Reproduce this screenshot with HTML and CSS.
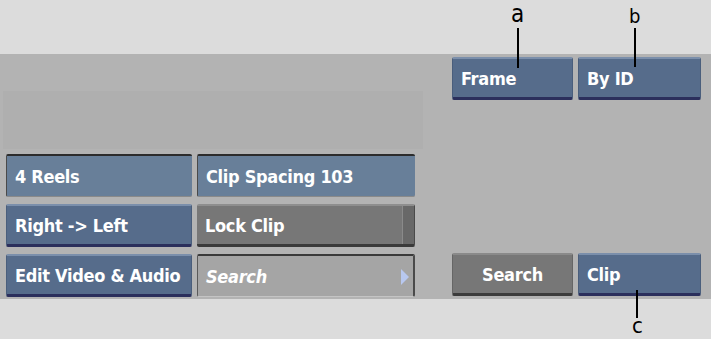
FILE: index.html
```html
<!DOCTYPE html>
<html lang="en">
<head>
    <meta charset="UTF-8">
    <title>Clip Search</title>
    <link rel="stylesheet" href="styles.css">
</head>
<body>
    <div class="page">
        <div class="top-strip"></div>
        <section class="panel">
            <div class="left">
                <div class="inset"></div>
                <div class="grid">
                    <div class="btn field">4 Reels</div>
                    <div class="btn field">Clip Spacing 103</div>
                    <div class="btn blue">Right -&gt; Left</div>
                    <div class="btn lock">Lock Clip</div>
                    <div class="btn blue">Edit Video &amp; Audio</div>
                    <div class="btn search-field"><em>Search</em><span class="arrow"></span></div>
                </div>
            </div>
            <div class="right">
                <div class="pair">
                    <div class="btn blue">Frame</div>
                    <div class="btn blue">By ID</div>
                </div>
                <div class="pair">
                    <div class="btn gray">Search</div>
                    <div class="btn blue">Clip</div>
                </div>
            </div>
        </section>
        <div class="bottom-strip"></div>

        <!-- callouts -->
        <div class="callout ca"><span>a</span><i></i></div>
        <div class="callout cb"><span>b</span><i></i></div>
        <div class="callout cc"><i></i><span>c</span></div>
    </div>
</body>
</html>
```

FILE: styles.css
```css
*,
*::before,
*::after{
    box-sizing: border-box;
}
body {
    margin: 0;
    background: #dcdcdc;
    font-family: "DejaVu Sans Condensed", "DejaVu Sans", sans-serif;
}
.page{
    position: relative;
    width: 711px;
    height: 339px;
    overflow: hidden;
}
.top-strip{
    height: 54px;
}
.bottom-strip{
    height: 40px;
}
.panel{
    height: 245px;
    background: #b3b3b3;
    display: flex;
}
.left{
    width: 425px;
    padding-top: 37px;
}
.inset{
    margin-left: 3px;
    width: 420px;
    height: 58px;
    background: #afafaf;
}
.grid{
    margin-top: 5px;
    padding-left: 6px;
    display: grid;
    grid-template-columns: 186px 218px;
    grid-auto-rows: 43px;
    column-gap: 5px;
    row-gap: 7px;
}
.right{
    margin-left: 27px;
    padding: 3px 0 3px;
    display: flex;
    flex-direction: column;
    justify-content: space-between;
}
.pair{
    display: grid;
    grid-template-columns: 121px 123px;
    grid-auto-rows: 43px;
    column-gap: 5px;
}
.btn{
    display: flex;
    align-items: center;
    padding-left: 8px;
    color: #fff;
    font-size: 18px;
    font-weight: bold;
    letter-spacing: -0.3px;
    border-radius: 2px;
    white-space: nowrap;
}
.field{
    background: #687f99;
    border-top: 2px solid #2c2c2c;
    border-left: 1px solid #4a4a4a;
    border-bottom: 1px solid #8a8a8a;
}
.blue{
    background: #566c8b;
    border-top: 2px solid #7b8fab;
    border-bottom: 3px solid #2b2f5c;
    border-left: 1px solid #4a5e7c;
    border-right: 1px solid #4a5e7c;
}
.lock{
    position: relative;
    background: #777;
    border-top: 2px solid #8e8e8e;
    border-bottom: 3px solid #3a3a3a;
    border-right: 1px solid #4a4a4a;
}
.lock::after{
    content: "";
    position: absolute;
    right: 0;
    top: 0;
    bottom: 0;
    width: 12px;
    background: #686868;
    border-left: 1px solid #8a8a8a;
}
.search-field{
    position: relative;
    background: #a5a5a5;
    border-top: 2px solid #3a3a3a;
    border-left: 1px solid #5a5a5a;
    border-right: 2px solid #4a4a4a;
    border-bottom: 1px solid #c4c4c4;
}
.search-field em{
    font-style: italic;
}
.arrow{
    position: absolute;
    right: 4px;
    top: 13px;
    border-top: 8px solid transparent;
    border-bottom: 8px solid transparent;
    border-left: 8px solid #b8c8f0;
}
.gray{
    justify-content: center;
    padding-left: 0;
    background: #777;
    border-top: 2px solid #8a8a8a;
    border-bottom: 3px solid #3c3c3c;
    border-left: 1px solid #666;
    border-right: 1px solid #666;
}
.callout{
    position: absolute;
    display: flex;
    flex-direction: column;
    align-items: center;
    font-size: 24px;
    color: #000;
    line-height: 24px;
}
.callout i{
    display: block;
    width: 2px;
    background: #000;
}
.ca{
    left: 511px;
    top: 2px;
}
.ca i{
    height: 40px;
    margin-top: 2px;
}
.cb{
    left: 629px;
    top: 6px;
    font-size: 20px;
    line-height: 20px;
}
.cb i{
    height: 39px;
    margin-top: 2px;
}
.cc{
    left: 632px;
    top: 290px;
    font-size: 22px;
    line-height: 16px;
}
.cc i{
    height: 28px;
}
```
